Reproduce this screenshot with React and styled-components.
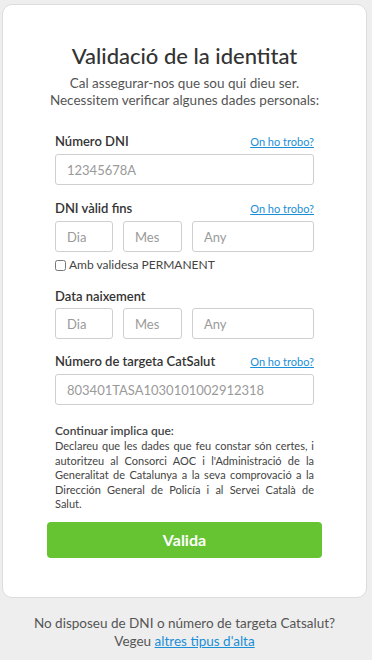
import React from 'react';
import styled, { createGlobalStyle } from 'styled-components';

const GlobalStyle = createGlobalStyle`
  body {
    margin: 0;
    background: #eeeeee;
    font-family: Lato, "Open Sans", sans-serif;
    color: #333;
  }
`;

const Page = styled.div`
  padding: 4px 5px 0 2px;
`;

const Card = styled.div`
  background: #fff;
  border: 1px solid #dcdcdc;
  border-radius: 10px;
  padding: 37px 0 0;
  box-sizing: border-box;
  height: 594px;
`;

const Title = styled.h1`
  margin: 0;
  text-align: center;
  font-size: 22px;
  font-weight: 500;
  color: #333;
  line-height: 28px;
`;

const Subtitle = styled.p`
  margin: 5px 0 0;
  text-align: center;
  font-size: 13.5px;
  line-height: 17px;
  color: #555;
`;

const Form = styled.div`
  margin: 24px 52px 0;
  display: flex;
  flex-direction: column;
`;

const Field = styled.div`
  margin-bottom: ${(p) => p.$mb ?? 15}px;
`;

const LabelRow = styled.div`
  display: flex;
  justify-content: space-between;
  align-items: baseline;
  margin-bottom: ${(p) => p.$mb ?? 5}px;
`;

const Label = styled.label`
  font-size: 13px;
  font-weight: 600;
  color: #333;
  line-height: 16px;
`;

const Help = styled.a`
  font-size: 11px;
  color: #1a8fd6;
  text-decoration: underline;
`;

const Input = styled.input`
  box-sizing: border-box;
  width: ${(p) => p.$w || '100%'};
  flex: ${(p) => (p.$grow ? '1' : 'none')};
  min-width: 0;
  height: 31px;
  border: 1px solid #cfcfcf;
  border-radius: 3px;
  padding: 0 11px;
  font-family: Lato, sans-serif;
  font-size: 13px;
  color: #333;
  outline: none;
  &::placeholder {
    color: #9a9a9a;
  }
`;

const DateRow = styled.div`
  display: flex;
  gap: 10px;
`;

const Check = styled.label`
  display: flex;
  align-items: center;
  gap: 3px;
  margin-top: 6px;
  font-size: 12px;
  line-height: 14px;
  color: #444;
`;

const Box = styled.input`
  margin: 0;
  width: 11px;
  height: 11px;
`;

const NoteTitle = styled.div`
  font-size: 12px;
  font-weight: 600;
  color: #444;
  line-height: 15px;
`;

const Note = styled.p`
  margin: 1px 0 0;
  font-size: 11px;
  line-height: 14.5px;
  color: #444;
  text-align: justify;
`;

const Button = styled.button`
  display: block;
  margin: 10px 44px 0;
  width: calc(100% - 88px);
  height: 36px;
  border: none;
  border-radius: 4px;
  background: #66c332;
  color: #fff;
  font-family: Lato, sans-serif;
  font-weight: 700;
  font-size: 16px;
  cursor: pointer;
`;

const Footer = styled.div`
  margin-top: 16px;
  text-align: center;
  font-size: 13.5px;
  line-height: 18px;
  color: #555;
  a {
    color: #1a8fd6;
  }
`;

const App = () => {
  return (
    <Page>
      <GlobalStyle />
      <Card>
        <Title>Validació de la identitat</Title>
        <Subtitle>
          Cal assegurar-nos que sou qui dieu ser.
          <br />
          Necessitem verificar algunes dades personals:
        </Subtitle>
        <Form>
          <Field>
            <LabelRow>
              <Label>Número DNI</Label>
              <Help href="#">On ho trobo?</Help>
            </LabelRow>
            <Input placeholder="12345678A" />
          </Field>
          <Field $mb={16}>
            <LabelRow>
              <Label>DNI vàlid fins</Label>
              <Help href="#">On ho trobo?</Help>
            </LabelRow>
            <DateRow>
              <Input $w="58px" placeholder="Dia" />
              <Input $w="59px" placeholder="Mes" />
              <Input $grow placeholder="Any" />
            </DateRow>
            <Check>
              <Box type="checkbox" />
              Amb validesa PERMANENT
            </Check>
          </Field>
          <Field $mb={14}>
            <LabelRow $mb={4}>
              <Label>Data naixement</Label>
            </LabelRow>
            <DateRow>
              <Input $w="58px" placeholder="Dia" />
              <Input $w="59px" placeholder="Mes" />
              <Input $grow placeholder="Any" />
            </DateRow>
          </Field>
          <Field $mb={18}>
            <LabelRow>
              <Label>Número de targeta CatSalut</Label>
              <Help href="#">On ho trobo?</Help>
            </LabelRow>
            <Input placeholder="803401TASA1030101002912318" />
          </Field>
          <NoteTitle>Continuar implica que:</NoteTitle>
          <Note>
            Declareu que les dades que feu constar són certes, i autoritzeu al Consorci AOC i
            l'Administració de la Generalitat de Catalunya a la seva comprovació a la Dirección
            General de Policía i al Servei Català de Salut.
          </Note>
        </Form>
        <Button>Valida</Button>
      </Card>
      <Footer>
        No disposeu de DNI o número de targeta Catsalut?
        <br />
        Vegeu <a href="#">altres tipus d'alta</a>
      </Footer>
    </Page>
  );
};

export default App;
